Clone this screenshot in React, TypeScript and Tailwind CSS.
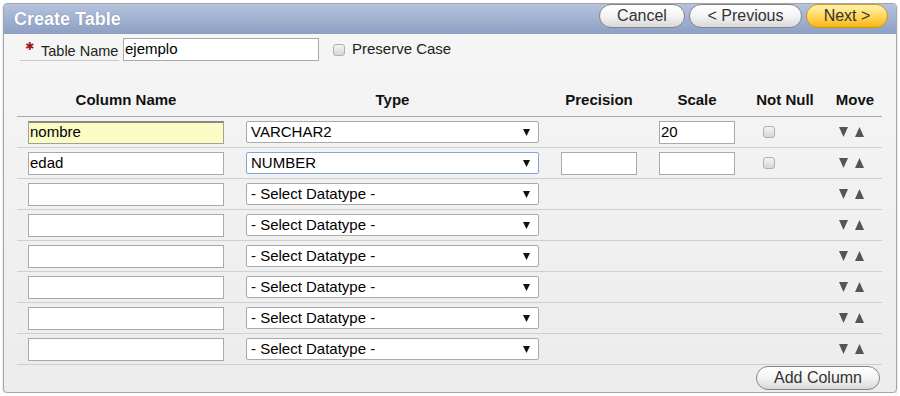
import React from "react";

const font = { fontFamily: '"Liberation Sans", Arial, sans-serif' };

function Btn({ children, w, yellow }: { children: React.ReactNode; w: string; yellow?: boolean }) {
  return (
    <div
      className={`${w} h-[24px] rounded-full border flex items-center justify-center text-[16px] text-[#333] ${
        yellow
          ? "border-[#c99a1c] bg-gradient-to-b from-[#fff2b0] via-[#ffd95a] to-[#f7b400]"
          : "border-[#858585] bg-gradient-to-b from-[#ffffff] via-[#f4f4f4] to-[#d8d8d8]"
      }`}
    >
      {children}
    </div>
  );
}

function Check() {
  return (
    <div className="w-[12px] h-[12px] rounded-[3px] border border-[#b0b0b0] bg-gradient-to-b from-[#f4f4f4] to-[#d6d6d6]" />
  );
}

function Select({ value, focus }: { value: string; focus?: boolean }) {
  return (
    <div
      className={`w-[293px] h-[22px] rounded-[2px] border bg-white flex items-center justify-between pl-[4px] pr-[8px] text-[15px] text-black ${
        focus ? "border-[#7ea6e0]" : "border-[#a9a9a9]"
      }`}
    >
      <span>{value}</span>
      <svg width="7" height="7" viewBox="0 0 7 7">
        <path d="M0 0 L7 0 L3.5 7 Z" fill="#111" />
      </svg>
    </div>
  );
}

function Input({ w, value, yellow }: { w: string; value?: string; yellow?: boolean }) {
  return (
    <div
      className={`${w} h-[23px] border flex items-center pl-[1px] text-[15px] text-black ${
        yellow ? "bg-[#fbfbc4] border-[#a0a0a0] border-t-[#888] border-t-2" : "bg-white border-[#a9a9a9]"
      }`}
    >
      {value}
    </div>
  );
}

function Move() {
  return (
    <div className="flex items-center gap-[7px] pl-[15px]">
      <svg width="9" height="10" viewBox="0 0 9 10">
        <path d="M0 0 L9 0 L4.5 10 Z" fill="#555" />
      </svg>
      <svg width="9" height="10" viewBox="0 0 9 10">
        <path d="M4.5 0 L9 10 L0 10 Z" fill="#555" />
      </svg>
    </div>
  );
}

const cols = "grid grid-cols-[218px_315px_98px_98px_78px_58px]";

type Row = { name?: string; type: string; prec?: boolean; scale?: string | null; nn?: boolean; yellow?: boolean; focus?: boolean };

const rows: Row[] = [
  { name: "nombre", type: "VARCHAR2", scale: "20", nn: true, yellow: true },
  { name: "edad", type: "NUMBER", prec: true, scale: "", nn: true, focus: true },
  ...Array.from({ length: 6 }, () => ({ type: "- Select Datatype -" })),
];

export default function App() {
  return (
    <div style={font} className="pl-[3px] pt-[3px]">
      <div className="w-[894px] h-[390px] border border-[#a6a6a6] rounded-[4px] shadow-[0_1px_2px_rgba(0,0,0,0.25)] bg-gradient-to-b from-[#f6f6f6] to-[#ececec] overflow-hidden flex flex-col">
        <div className="h-[30px] shrink-0 flex items-center justify-between pl-[10px] pr-[8px] bg-gradient-to-b from-[#b6c3dd] to-[#8c9fc3]">
          <div className="text-white font-bold text-[18px] [text-shadow:0_0_1px_rgba(60,80,120,0.6)]">Create Table</div>
          <div className="flex items-center gap-[4px] -mt-[6px]">
            <Btn w="w-[86px]">Cancel</Btn>
            <Btn w="w-[113px]">&lt; Previous</Btn>
            <Btn w="w-[82px]" yellow>
              Next &gt;
            </Btn>
          </div>
        </div>

        <div className="flex items-center mt-[4px] pl-[16px] h-[23px]">
          <div className="w-[99px] h-[23px] border-b border-[#c8c8c8] flex items-center pt-[5px] pl-[5px] text-[14.5px] text-[#222]">
            <span className="text-[#9b1b1b] text-[11px] w-[9px] mr-[7px] -mt-[8px] font-bold" style={{ fontFamily: '"DejaVu Sans", sans-serif' }}>
              ✱
            </span>
            Table Name
          </div>
          <div className="ml-[4px] w-[196px] h-[23px] border border-[#a9a9a9] bg-white flex items-center pl-[1px] text-[15px] text-black">
            ejemplo
          </div>
          <div className="ml-[14px]">
            <Check />
          </div>
          <div className="ml-[7px] text-[15px] text-[#222]">Preserve Case</div>
        </div>

        <div className="ml-[13px] mt-[24px] w-[865px]">
          <div className={`${cols} h-[32px] border-b border-[#ababab] items-center text-[15px] font-bold text-[#111]`}>
            <div className="text-center">Column Name</div>
            <div className="text-center">Type</div>
            <div className="text-center">Precision</div>
            <div className="text-center">Scale</div>
            <div className="text-center">Not Null</div>
            <div className="text-center pl-[4px]">Move</div>
          </div>
          {rows.map((r, i) => (
            <div key={i} className={`${cols} h-[31px] border-b border-[#cfcfcf] items-center`}>
              <div className="pl-[11px]">
                <Input w="w-[196px]" value={r.name} yellow={r.yellow} />
              </div>
              <div className="pl-[11px]">
                <Select value={r.type} focus={r.focus} />
              </div>
              <div className="flex justify-center">{r.prec ? <Input w="w-[76px]" value="" /> : null}</div>
              <div className="flex justify-center">
                {r.scale !== undefined && r.scale !== null ? <Input w="w-[76px]" value={r.scale} /> : null}
              </div>
              <div className="pl-[17px]">{r.nn ? <Check /> : null}</div>
              <Move />
            </div>
          ))}
          <div className="flex justify-end pr-[2px] pt-[1px]">
            <Btn w="w-[124px]">Add Column</Btn>
          </div>
        </div>
      </div>
    </div>
  );
}
